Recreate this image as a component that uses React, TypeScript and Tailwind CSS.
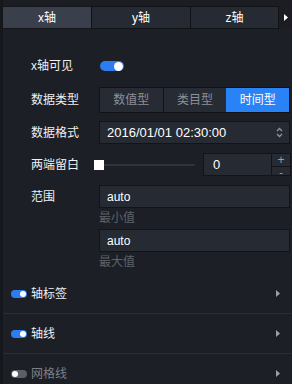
const font = { fontFamily: '"Liberation Sans", "Noto Sans CJK SC", sans-serif' };

function Chevron({ className }: { className?: string }) {
  return (
    <svg width="4" height="7" viewBox="0 0 4 7" className={className}>
      <path d="M0 0 L4 3.5 L0 7 Z" fill="currentColor" />
    </svg>
  );
}

function SmallToggle({ on }: { on: boolean }) {
  return (
    <div
      className={`w-[16px] h-[8px] rounded-full flex items-center px-[1px] ${
        on ? "bg-[#2d7cf0] justify-end" : "bg-[#5b5e66] justify-start"
      }`}
    >
      <div className="w-[6px] h-[6px] rounded-full bg-white" />
    </div>
  );
}

function Section({ label, on }: { label: string; on: boolean }) {
  return (
    <div className="h-[40px] flex items-center border-b border-[#2a2d34] pl-[8px] pr-[12px]">
      <SmallToggle on={on} />
      <span className={`ml-[4px] text-[12px] ${on ? "text-[#eef0f3]" : "text-[#7c8088]"}`}>{label}</span>
      <Chevron className="ml-auto text-[#9aa0a8]" />
    </div>
  );
}

export default function App() {
  return (
    <div className="w-[292px] h-[384px] overflow-hidden bg-[#1c1f26] flex" style={font}>
      {/* left strip */}
      <div className="w-[3px] shrink-0 bg-[#15171c]" />

      <div className="flex-1">
        {/* Tabs */}
        <div className="h-[6px] bg-[#1b1d23]" />
        <div className="flex items-center h-[23px] bg-[#1b1d23]">
          <div className="w-[88px] h-full flex items-center justify-center bg-[#3a404b] border-y border-[#14161a] text-white text-[12px]">
            x轴
          </div>
          <div className="w-[100px] h-full flex items-center justify-center bg-[#262a33] border border-[#111317] text-white text-[12px]">
            y轴
          </div>
          <div className="w-[88px] h-full flex items-center justify-center bg-[#262a33] border-y border-r border-[#111317] text-white text-[12px]">
            z轴
          </div>
          <Chevron className="ml-[5px] text-white" />
        </div>

        {/* x轴可见 */}
        <div className="mt-[23px] h-[28px] flex items-center pl-[28px]">
          <span className="w-[69px] text-[12px] text-[#eef0f3]">x轴可见</span>
          <div className="w-[24px] h-[10px] rounded-full bg-[#2d7cf0] flex items-center justify-end px-[1px]">
            <div className="w-[9px] h-[9px] rounded-full bg-white" />
          </div>
        </div>

        {/* 数据类型 */}
        <div className="mt-[7px] flex items-center pl-[28px]">
          <span className="w-[68px] text-[12px] text-[#eef0f3]">数据类型</span>
          <div className="flex h-[26px] w-[191px] border border-[#111317] text-[12px]">
            <div className="flex-1 flex items-center justify-center bg-[#272b33] text-[#8b9099] border-r border-[#111317]">
              数值型
            </div>
            <div className="flex-1 flex items-center justify-center bg-[#272b33] text-[#8b9099]">
              类目型
            </div>
            <div className="flex-1 flex items-center justify-center bg-[#2a83f6] text-white">
              时间型
            </div>
          </div>
        </div>

        {/* 数据格式 */}
        <div className="mt-[8px] flex items-center pl-[28px]">
          <span className="w-[68px] text-[12px] text-[#eef0f3]">数据格式</span>
          <div className="flex items-center h-[23px] w-[191px] border border-[#121418] bg-[#262a32] pl-[7px] pr-[6px]">
            <span className="text-[13px] text-white">2016/01/01 02:30:00</span>
            <svg width="7" height="11" viewBox="0 0 7 11" className="ml-auto text-[#8f949c]">
              <path d="M1 4 L3.5 1.5 L6 4" stroke="currentColor" strokeWidth="1.3" fill="none" />
              <path d="M1 7 L3.5 9.5 L6 7" stroke="currentColor" strokeWidth="1.3" fill="none" />
            </svg>
          </div>
        </div>

        {/* 两端留白 */}
        <div className="mt-[9px] flex items-center pl-[28px]">
          <span className="w-[63px] text-[12px] text-[#eef0f3]">两端留白</span>
          <div className="w-[10px] h-[10px] bg-white" />
          <div className="w-[91px] h-[2px] bg-[#30333a]" />
          <div className="ml-[8px] flex h-[23px] border border-[#121418]">
            <div className="w-[68px] flex items-center bg-[#262a32] pl-[9px] text-[13px] text-white border-r border-[#121418]">
              0
            </div>
            <div className="w-[18px] flex flex-col bg-[#262a32]">
              <div className="flex-1 flex items-center justify-center text-[#9aa0a8] text-[12px] leading-none border-b border-[#121418]">
                +
              </div>
              <div className="flex-1 flex items-center justify-center text-[#9aa0a8] text-[11px] leading-none">
                -
              </div>
            </div>
          </div>
        </div>

        {/* 范围 */}
        <div className="mt-[9px] flex items-start pl-[28px]">
          <span className="w-[68px] h-[23px] flex items-center text-[12px] text-[#eef0f3]">范围</span>
          <div className="flex flex-col w-[191px]">
            <div className="h-[23px] flex items-center border border-[#121418] bg-[#262a32] pl-[7px] text-[12px] text-white">
              auto
            </div>
            <span className="mt-[4px] h-[12px] leading-[12px] text-[12px] text-[#5d636d]">最小值</span>
            <div className="mt-[5px] h-[23px] flex items-center border border-[#121418] bg-[#262a32] pl-[7px] text-[12px] text-white">
              auto
            </div>
            <span className="mt-[4px] h-[12px] leading-[12px] text-[12px] text-[#5d636d]">最大值</span>
          </div>
        </div>

        {/* Sections */}
        <div className="mt-[6px]">
          <Section label="轴标签" on />
          <Section label="轴线" on />
          <Section label="网格线" on={false} />
        </div>
      </div>
    </div>
  );
}
